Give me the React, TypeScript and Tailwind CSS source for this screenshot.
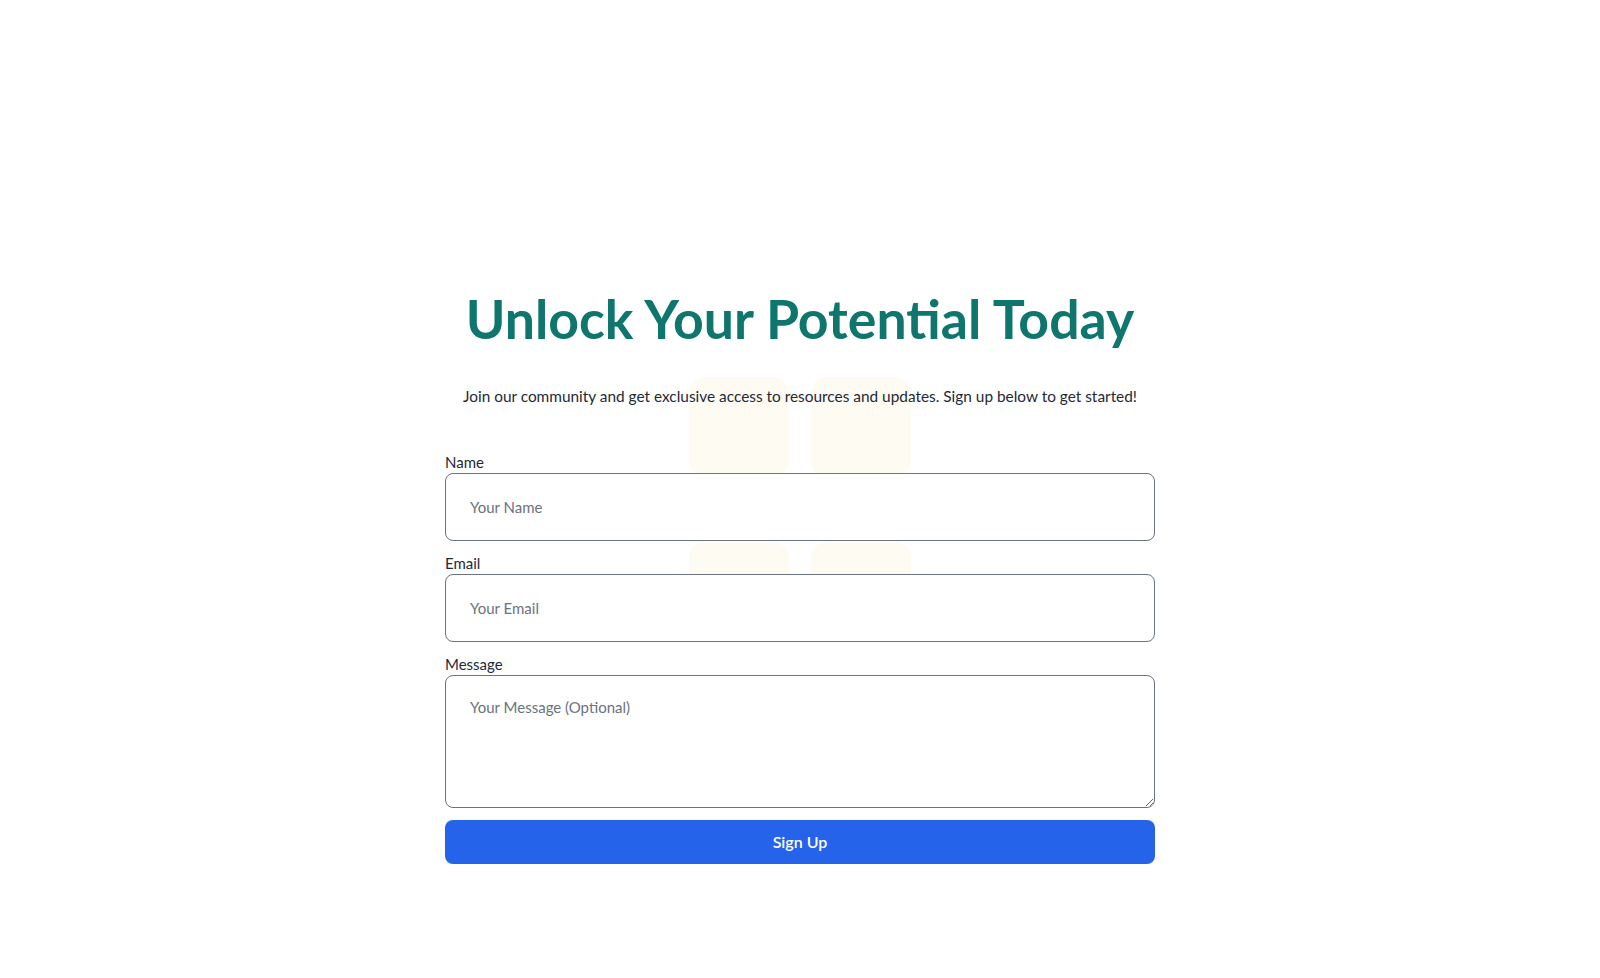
import { useState } from "react";

const fieldClass =
  "w-full rounded-lg border border-[#6b7280] bg-white px-6 text-[15px] text-[#1f2937] placeholder:text-[#6b7280] outline-none";

const App = () => {
  const [name, setName] = useState("");
  const [email, setEmail] = useState("");
  const [message, setMessage] = useState("");

  return (
    <main
      className="min-h-screen w-full bg-white pt-[287px] text-[#1f2937]"
      style={{ fontFamily: "Lato, 'Noto Sans', sans-serif" }}
    >
      <div className="relative mx-auto flex w-[710px] flex-col items-center">
        {/* faint decorative tiles behind the form */}
        <div className="pointer-events-none absolute left-[244px] top-[90px] grid grid-cols-2 gap-x-[22px] gap-y-[65px]">
          <div className="h-[100px] w-[100px] rounded-2xl bg-[#fdfbf2]" />
          <div className="h-[100px] w-[100px] rounded-2xl bg-[#fdfbf2]" />
          <div className="h-[100px] w-[100px] rounded-2xl bg-[#fdfbf2]" />
          <div className="h-[100px] w-[100px] rounded-2xl bg-[#fdfbf2]" />
        </div>

        <h1 className="relative text-[53.6px] font-bold leading-[62px] text-[#0f766e]">
          Unlock Your Potential Today
        </h1>
        <p className="relative mt-[36px] text-[15.4px] leading-[22px] text-[#1f2937]">
          Join our community and get exclusive access to resources and updates. Sign up below to get started!
        </p>

        <form
          className="relative mt-[45px] flex w-full flex-col gap-3"
          onSubmit={(e) => e.preventDefault()}
        >
          <label className="flex flex-col">
            <span className="text-[15px] leading-[21px] text-[#1f2937]">Name</span>
            <input
              className={`${fieldClass} h-[68px]`}
              placeholder="Your Name"
              value={name}
              onChange={(e) => setName(e.target.value)}
            />
          </label>
          <label className="flex flex-col">
            <span className="text-[15px] leading-[21px] text-[#1f2937]">Email</span>
            <input
              type="email"
              className={`${fieldClass} h-[68px]`}
              placeholder="Your Email"
              value={email}
              onChange={(e) => setEmail(e.target.value)}
            />
          </label>
          <label className="flex flex-col">
            <span className="text-[15px] leading-[21px] text-[#1f2937]">Message</span>
            <textarea
              className={`${fieldClass} h-[133px] py-5`}
              placeholder="Your Message (Optional)"
              value={message}
              onChange={(e) => setMessage(e.target.value)}
            />
          </label>
          <button
            type="submit"
            className="h-11 w-full rounded-lg bg-[#2563eb] text-base font-semibold text-white"
          >
            Sign Up
          </button>
        </form>
      </div>
    </main>
  );
};

export default App;
